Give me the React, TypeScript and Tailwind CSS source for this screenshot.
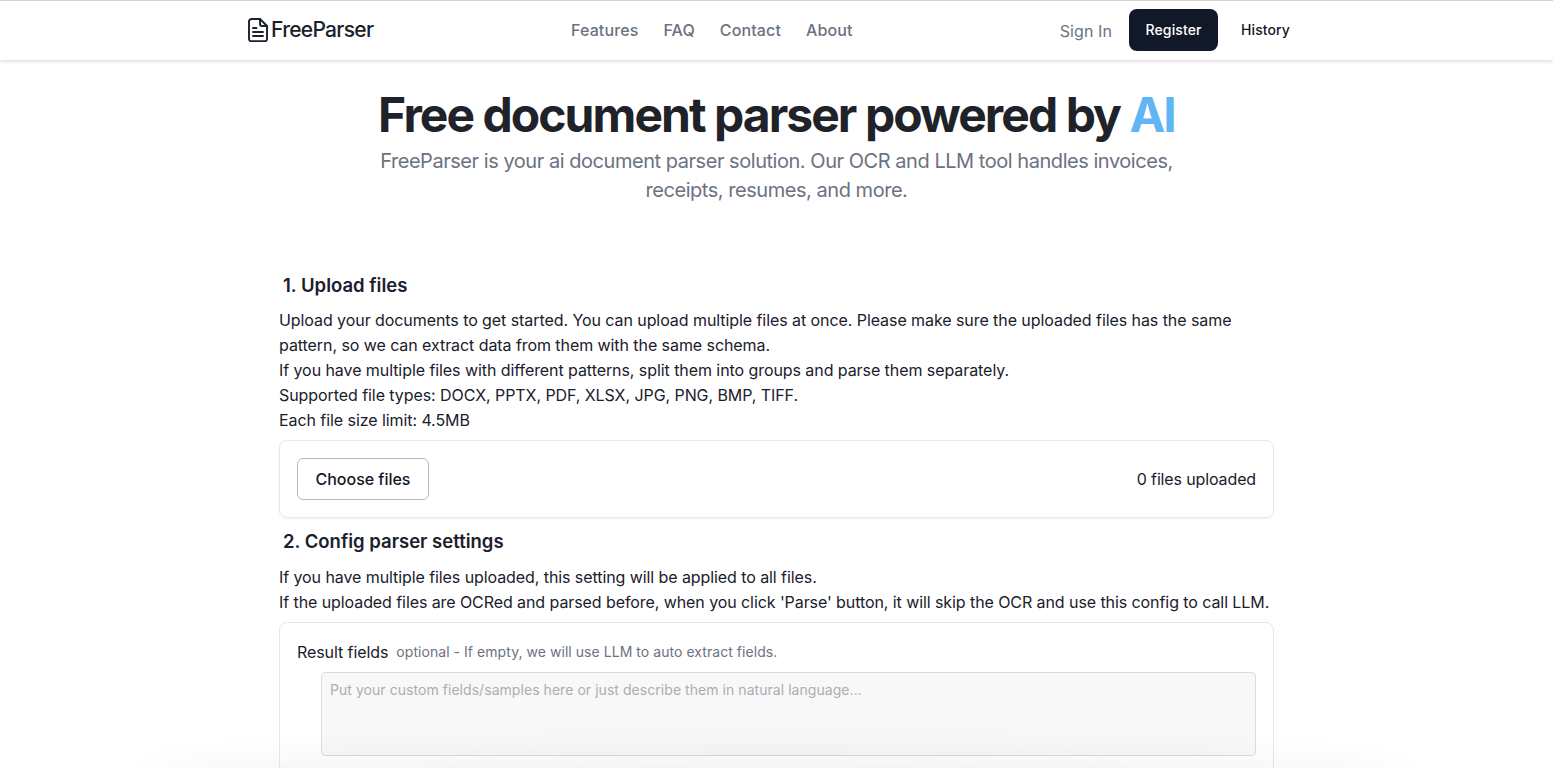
const navLinks = ["Features", "FAQ", "Contact", "About"]

function LogoIcon() {
  return (
    <svg viewBox="0 0 20 24" className="h-[24px] w-[20px]" fill="none" stroke="currentColor" strokeWidth="1.9" strokeLinecap="round" strokeLinejoin="round">
      <path d="M3.5 1H12l7 7v13a2.2 2.2 0 0 1-2.2 2.2H3.2A2.2 2.2 0 0 1 1 21V3.5A2.5 2.5 0 0 1 3.5 1z" />
      <path d="M12 1v5a2 2 0 0 0 2 2h5" />
      <path d="M5 10h3.5M5 14h10M5 18h10" />
    </svg>
  )
}

function Header() {
  return (
    <header className="relative z-10 h-[60px] shrink-0 border-t border-[#d4d4d4] bg-white shadow-[0_1px_4px_rgba(0,0,0,0.18)]">
      <div className="mx-auto flex h-full w-[1057px] items-center pb-[1px]">
        <a className="flex w-[323px] items-center gap-[3px] text-[#1a202c]">
          <LogoIcon />
          <span className="text-[21px] font-medium tracking-[-0.7px]">FreeParser</span>
        </a>
        <nav className="flex items-center gap-[25px] text-base font-[450] tracking-[0.12px] text-[#6b7280]">
          {navLinks.map((link) => (
            <a key={link}>{link}</a>
          ))}
        </nav>
        <div className="ml-auto flex items-center justify-end">
          <a className="mt-[1px] text-base tracking-[0.1px] text-[#6b7280]">Sign In</a>
          <button className="ml-[17px] h-[42px] w-[89px] rounded-lg bg-[#111827] text-sm font-medium tracking-[0.1px] text-white">Register</button>
          <button className="ml-[23px] mr-[15px] text-sm font-medium tracking-[0.1px] text-[#111827]">History</button>
        </div>
      </div>
    </header>
  )
}

function Hero() {
  return (
    <section className="flex flex-col items-center pt-[29px] text-center">
      <h1 className="text-[48px] leading-[52px] font-bold tracking-[-1.95px] text-[#1f2329]">
        Free document parser powered by <span className="text-[#60b5f5]">AI</span>
      </h1>
      <p className="mt-[6px] w-[820px] text-xl leading-[29px] tracking-[-0.46px] text-[#6b7280]">
        FreeParser is your ai document parser solution. Our OCR and LLM tool handles invoices, receipts, resumes, and more.
      </p>
    </section>
  )
}

export default function App() {
  return (
    <div className="relative flex h-screen flex-col overflow-hidden bg-white font-['Inter',sans-serif] text-[#1a202c]">
      <Header />
      <main className="mx-auto w-[995px] shrink-0">
        <Hero />

        <h2 className="mt-[66px] pl-[4px] text-[18.5px] leading-[28px] font-semibold">1. Upload files</h2>
        <div className="mt-[9px] text-base leading-[25px] tracking-[-0.07px]">
          <p>
            Upload your documents to get started. You can upload multiple files at once. Please make sure the uploaded files has the same pattern, so we can extract data from them with the same schema.
          </p>
          <p>If you have multiple files with different patterns, split them into groups and parse them separately.</p>
          <p>Supported file types: DOCX, PPTX, PDF, XLSX, JPG, PNG, BMP, TIFF.</p>
          <p>Each file size limit: 4.5MB</p>
        </div>
        <div className="mt-[7px] flex h-[78px] items-center justify-between rounded-lg border border-[#e5e7eb] px-[17px] shadow-[0_1px_2px_rgba(0,0,0,0.05)]">
          <button className="h-[42px] w-[132px] rounded-md border border-[#b4b8bf] text-base font-[450] tracking-[-0.02px] text-[#111827]">Choose files</button>
          <span className="text-base tracking-[-0.13px]">0 files uploaded</span>
        </div>

        <h2 className="mt-[9px] pl-[4px] text-[18.5px] leading-[28px] font-semibold">2. Config parser settings</h2>
        <div className="mt-[10px] text-base leading-[25px] tracking-[-0.08px]">
          <p>If you have multiple files uploaded, this setting will be applied to all files.</p>
          <p>If the uploaded files are OCRed and parsed before, when you click 'Parse' button, it will skip the OCR and use this config to call LLM.</p>
        </div>
        <div className="mt-[7px] rounded-lg border border-[#e5e7eb] px-[17px] pt-[17px] pb-[17px]">
          <div className="flex items-center">
            <span className="text-base leading-[24px] tracking-[-0.08px]">Result fields</span>
            <span className="ml-[8px] text-sm tracking-[0.05px] text-[#6b7280]">optional - If empty, we will use LLM to auto extract fields.</span>
          </div>
          <textarea
            className="mt-[8px] ml-[24px] block h-[84px] w-[935px] resize-none rounded border border-[#dcdcdf] bg-[#f8f8f9] px-[8px] py-[7px] text-sm tracking-[0.05px] outline-none placeholder:text-[#abadb3]"
            placeholder="Put your custom fields/samples here or just describe them in natural language..."
          />
        </div>
      </main>
      <div className="pointer-events-none absolute -bottom-[32px] left-[150px] h-[32px] w-[1250px] rounded-[50%] shadow-[0_0_40px_12px_rgba(0,0,0,0.06)]" />
    </div>
  )
}
